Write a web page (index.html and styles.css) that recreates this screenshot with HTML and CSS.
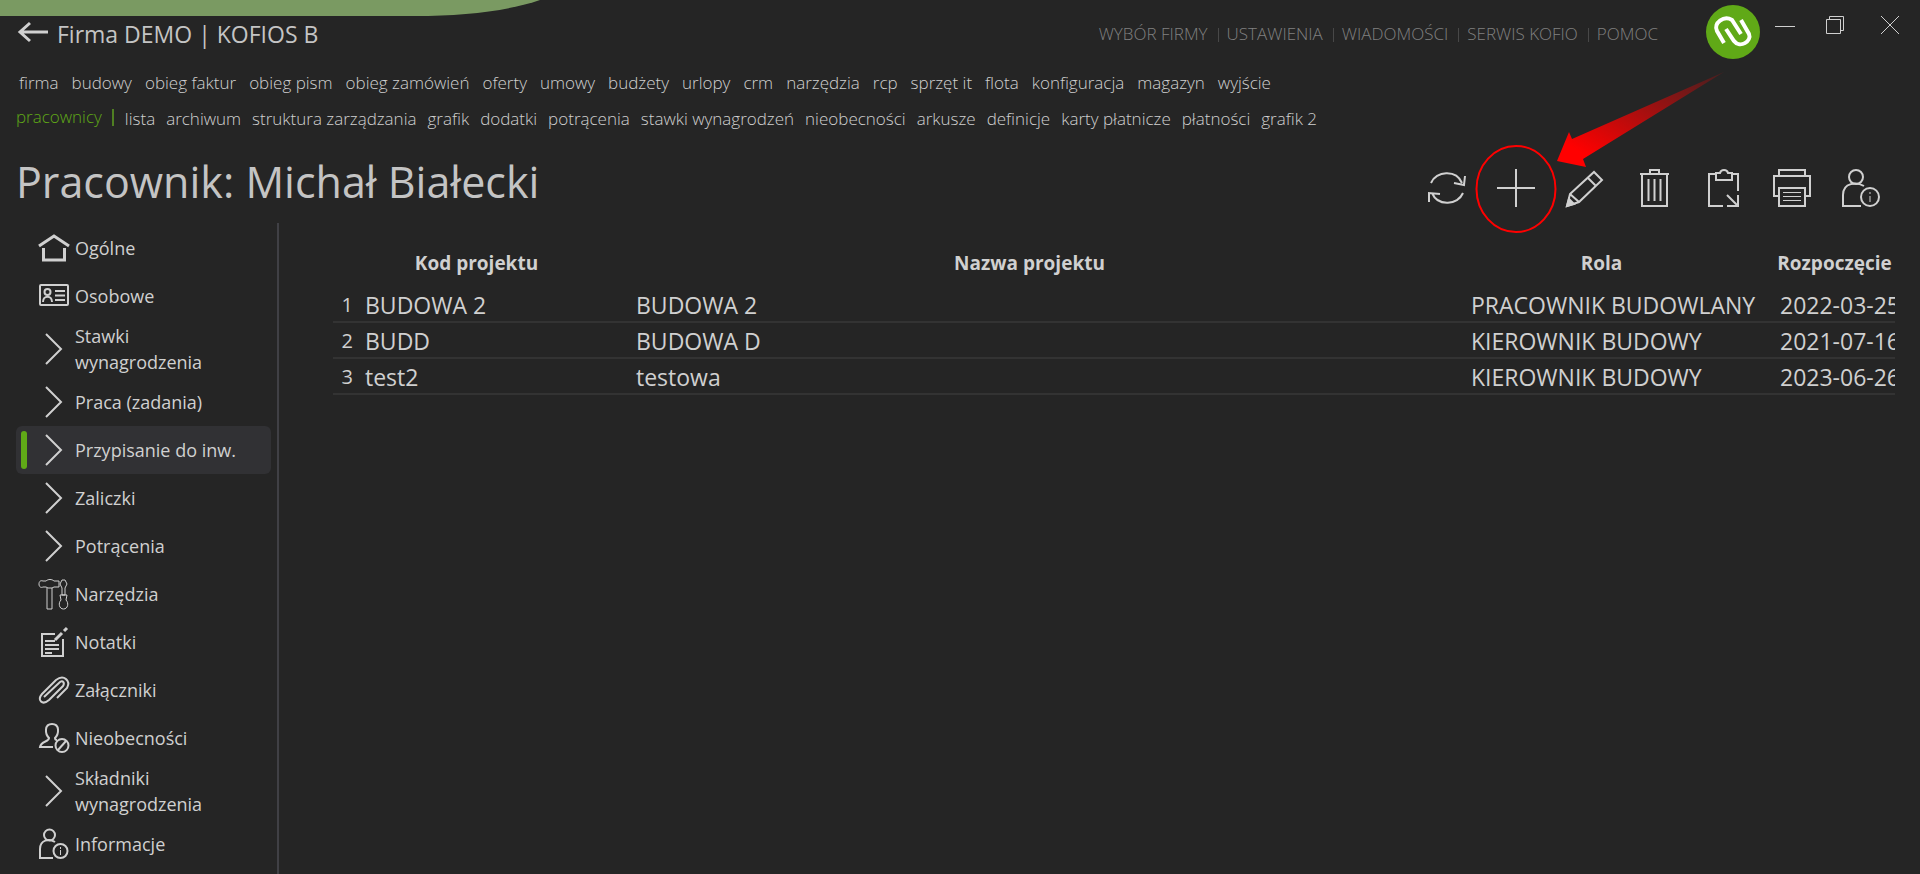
FILE: index.html
```
<!DOCTYPE html>
<html lang="pl">
<head>
    <meta charset="UTF-8">
    <meta name="viewport" content="width=device-width, initial-scale=1.0">
    <title>Firma DEMO | KOFIOS B</title>
    <link rel="stylesheet" href="styles.css">
</head>
<body>

    <svg class="wave" viewBox="0 0 540 16" aria-hidden="true"><path d="M0 0H540C508 11 465 16 415 16H0Z"/></svg>

    <header class="topbar">
        <button class="back" aria-label="Wstecz">
            <svg viewBox="0 0 30 20"><path d="M30 10H3M12 1L2 10l10 9" stroke-width="3"/></svg>
        </button>
        <span class="company">Firma DEMO | KOFIOS B</span>
        <nav class="top-links">
            <a href="#">WYBÓR FIRMY</a>
            <a href="#">USTAWIENIA</a>
            <a href="#">WIADOMOŚCI</a>
            <a href="#">SERWIS KOFIO</a>
            <a href="#">POMOC</a>
        </nav>
        <svg class="logo" viewBox="0 0 54 54" aria-hidden="true">
            <circle cx="27" cy="27" r="27"/>
            <path d="M18 38L11 26C7 18 18 10 26 15L35 29M20 24L28 36C34 44 46 36 43 29L35 15"/>
        </svg>
        <div class="window-buttons">
            <button aria-label="Minimalizuj"><svg viewBox="0 0 20 20"><path d="M0 11.500H20"/></svg></button>
            <button aria-label="Przywróć"><svg viewBox="0 0 20 20"><path d="M1.500 4.500h14v14h-14zM4.500 4V1.500h14v14H16"/></svg></button>
            <button class="close" aria-label="Zamknij"><svg viewBox="0 0 20 20"><path d="M1 1L19 19M19 1L1 19"/></svg></button>
        </div>
    </header>

    <nav class="menu">
        <a href="#">firma</a>
        <a href="#">budowy</a>
        <a href="#">obieg faktur</a>
        <a href="#">obieg pism</a>
        <a href="#">obieg zamówień</a>
        <a href="#">oferty</a>
        <a href="#">umowy</a>
        <a href="#">budżety</a>
        <a href="#">urlopy</a>
        <a href="#">crm</a>
        <a href="#">narzędzia</a>
        <a href="#">rcp</a>
        <a href="#">sprzęt it</a>
        <a href="#">flota</a>
        <a href="#">konfiguracja</a>
        <a href="#">magazyn</a>
        <a href="#">wyjście</a>
    </nav>

    <nav class="menu submenu">
        <a href="#" class="current">pracownicy</a>
        <a href="#">lista</a>
        <a href="#">archiwum</a>
        <a href="#">struktura zarządzania</a>
        <a href="#">grafik</a>
        <a href="#">dodatki</a>
        <a href="#">potrącenia</a>
        <a href="#">stawki wynagrodzeń</a>
        <a href="#">nieobecności</a>
        <a href="#">arkusze</a>
        <a href="#">definicje</a>
        <a href="#">karty płatnicze</a>
        <a href="#">płatności</a>
        <a href="#">grafik 2</a>
    </nav>

    <div class="title-row">
        <h1>Pracownik: Michał Białecki</h1>
        <div class="toolbar">
            <button aria-label="Odśwież">
                <svg viewBox="0 0 38 38"><path d="M3 14C8 2 28 0 34 14M37 7l-1 9-10-2M35 24C30 36 10 38 4 24M1 33V24l11 1"/></svg>
            </button>
            <button class="add" aria-label="Dodaj">
                <svg viewBox="0 0 38 38"><path d="M19 0V38M0 19H38"/></svg>
                <svg class="pointer" viewBox="0 0 260 170" aria-hidden="true">
                    <defs>
                        <linearGradient id="fade" x1="0" y1="1" x2="1" y2="0">
                            <stop offset="0.150" stop-color="#f00"/>
                            <stop offset="1" stop-color="#f00" stop-opacity="0.150"/>
                        </linearGradient>
                    </defs>
                    <ellipse cx="44" cy="122" rx="39.500" ry="43"/>
                    <path d="M85 94L97 65L100 72L252 5L111 92L114 100Z"/>
                </svg>
            </button>
            <button aria-label="Edytuj">
                <svg viewBox="0 0 38 38"><path d="M1 37L4 25L28 3L36 11L13 33ZM22 9l8 8M4 25l9 8"/><path class="solid" d="M1 37l2-7 5 5z"/></svg>
            </button>
            <button aria-label="Usuń">
                <svg viewBox="0 0 38 38"><path d="M5 5H34M7 5V37H32V5M15 5V1H24V5M13.500 10V32M19.500 10V32M25.500 10V32"/></svg>
            </button>
            <button aria-label="Przenieś">
                <svg viewBox="0 0 38 38"><path d="M11 5H5V37H19M28 5H34V22M12 4H16C17 0 23 0 24 4H28V11H12ZM23 26L33 36M34 26V37H23"/></svg>
            </button>
            <button aria-label="Drukuj">
                <svg viewBox="0 0 38 38"><path d="M6 7V1H32V7M6 27H1V7H37V27H32M6 19H32V37H6Z"/><path class="thin" d="M10 23.500H28M10 27.500H28M10 31.500H28"/></svg>
            </button>
            <button aria-label="Informacje o pracowniku">
                <svg viewBox="0 0 38 38"><circle cx="14" cy="8" r="7"/><path d="M19 37H1V26C1 13 15 13 22 17"/><circle cx="28" cy="28" r="9"/><path class="thin" d="M28 27V33M28 23V25"/></svg>
            </button>
        </div>
    </div>

    <div class="content">
        <nav class="sidebar">
            <a href="#"><svg viewBox="0 0 30 30"><path d="M0 13L15 3L30 13M4.500 15V27H25.500V15" stroke-width="3"/></svg>Ogólne</a>
            <a href="#"><svg viewBox="0 0 30 30"><rect x="1" y="4" width="28" height="20" rx="1"/><circle cx="8.500" cy="11" r="3"/><path d="M4 21C4 14 13 14 13 21M16 10H26M16 14.500H26M16 19H26"/></svg>Osobowe</a>
            <a href="#"><svg viewBox="0 0 30 30"><path d="M7 0L22 15L7 30"/></svg>Stawki<br>wynagrodzenia</a>
            <a href="#"><svg viewBox="0 0 30 30"><path d="M7 0L22 15L7 30"/></svg>Praca (zadania)</a>
            <a href="#" class="active"><svg viewBox="0 0 30 30"><path d="M7 0L22 15L7 30"/></svg>Przypisanie do inw.</a>
            <a href="#"><svg viewBox="0 0 30 30"><path d="M7 0L22 15L7 30"/></svg>Zaliczki</a>
            <a href="#"><svg viewBox="0 0 30 30"><path d="M7 0L22 15L7 30"/></svg>Potrącenia</a>
            <a href="#"><svg viewBox="0 0 30 30" class="fine"><path d="M8 9V30H13V9M7 2L4 2C1 1 0 3 0 5C0 8 2 9 4 8H7L9 9H13L15 8H20V2H15C13 0 9 0 7 2ZM23 1H26L28 5L26 9V16H23V9L21 5ZM21 16H28L27 21C30 24 29 30 24.500 30C20 30 19 24 22 21Z"/></svg>Narzędzia</a>
            <a href="#"><svg viewBox="0 0 30 30"><path d="M16 7H3V29H24V12M6 14H16M6 18H20M6 22H20M6 26H13"/><path d="M16 13L23 6M25 4L28 1" stroke-width="3"/></svg>Notatki</a>
            <a href="#"><svg viewBox="0 0 30 30"><path d="M5 22L21 7C24 5 26 8 24 11L10 25C3 31 -2 25 3 19L17 5C25 -1 32 6 28 13L18 23"/></svg>Załączniki</a>
            <a href="#"><svg viewBox="0 0 30 30"><path d="M14 24H1C2 18 10 19 10 15C6 11 5 1 13 1C21 1 20 11 16 15C16 16 17 17 18 17"/><circle cx="23" cy="22.500" r="6.500"/><path d="M19 27L27 18"/></svg>Nieobecności</a>
            <a href="#"><svg viewBox="0 0 30 30"><path d="M7 0L22 15L7 30"/></svg>Składniki<br>wynagrodzenia</a>
            <a href="#"><svg viewBox="0 0 30 30"><circle cx="10.500" cy="6" r="5.500"/><path d="M14 29H1V20C1 11 10 9 16 13"/><circle cx="21.500" cy="22" r="7"/><path class="thin" d="M21.500 21V26M21.500 18V20"/></svg>Informacje</a>
        </nav>

        <main>
            <table>
                <colgroup>
                    <col class="col-no">
                    <col class="col-code">
                    <col>
                    <col class="col-role">
                    <col class="col-start">
                </colgroup>
                <thead>
                    <tr>
                        <th></th>
                        <th>Kod projektu</th>
                        <th>Nazwa projektu</th>
                        <th>Rola</th>
                        <th>Rozpoczęcie</th>
                    </tr>
                </thead>
                <tbody>
                    <tr>
                        <td>1</td>
                        <td>BUDOWA 2</td>
                        <td>BUDOWA 2</td>
                        <td>PRACOWNIK BUDOWLANY</td>
                        <td>2022-03-25</td>
                    </tr>
                    <tr>
                        <td>2</td>
                        <td>BUDD</td>
                        <td>BUDOWA D</td>
                        <td>KIEROWNIK BUDOWY</td>
                        <td>2021-07-16</td>
                    </tr>
                    <tr>
                        <td>3</td>
                        <td>test2</td>
                        <td>testowa</td>
                        <td>KIEROWNIK BUDOWY</td>
                        <td>2023-06-26</td>
                    </tr>
                </tbody>
            </table>
        </main>
    </div>

</body>
</html>
```
FILE: styles.css
```
body {
    margin: 0;
    height: 100vh;
    display: flex;
    flex-direction: column;
    overflow: hidden;
    background-color: #252525;
    color: #d0d0d0;
    font-family: "Open Sans", "Noto Sans", sans-serif;
}
a {
    color: inherit;
    text-decoration: none;
}
button {
    padding: 0;
    border: none;
    background: none;
    color: inherit;
    cursor: pointer;
}
svg {
    display: block;
    fill: none;
    stroke: currentColor;
    stroke-width: 2;
    overflow: visible;
}
.wave {
    position: absolute;
    top: 0;
    left: 0;
    width: 540px;
    fill: #7a9a62;
    stroke: none;
}

/* top bar */
.topbar {
    display: flex;
    align-items: center;
    height: 64px;
    padding: 0 20px 0 18px;
}
.back svg {
    width: 30px;
    height: 20px;
}
.company {
    margin-left: 9px;
    padding-top: 4px;
    font-size: 23px;
    color: #c4c4c4;
}
.top-links {
    display: flex;
    margin-left: auto;
    padding-top: 2px;
    font-size: 17px;
    font-weight: 300;
    color: #808080;
}
.top-links a + a::before {
    content: "";
    display: inline-block;
    height: 14px;
    margin: 0 8px 0 10px;
    border-left: 1px solid #484848;
    vertical-align: -2px;
}
.logo {
    width: 54px;
    height: 54px;
    margin-left: 48px;
}
.logo circle {
    fill: #60a917;
    stroke: none;
}
.logo path {
    stroke: #fff;
    stroke-width: 4;
}
.window-buttons {
    display: flex;
    gap: 30px;
    margin: 0 0 14px 15px;
}
.window-buttons svg {
    width: 20px;
    height: 20px;
    stroke-width: 1;
}
.window-buttons .close {
    margin-left: 5px;
}

/* menus */
.menu {
    display: flex;
    align-items: center;
    gap: 13px;
    height: 36px;
    padding: 0 19px;
    font-size: 17px;
    font-weight: 300;
    white-space: nowrap;
}
.submenu {
    gap: 11px;
    padding: 0 16px;
}
.submenu .current {
    padding-bottom: 4px;
    color: #60a917;
}
.submenu .current::after {
    content: "";
    display: inline-block;
    height: 17px;
    margin-left: 10px;
    border-left: 2px solid #4f7f22;
    vertical-align: -3px;
}

/* title and toolbar */
.title-row {
    display: flex;
    align-items: center;
    justify-content: space-between;
    height: 87px;
    padding: 0 40px 0 16px;
}
h1 {
    margin: 0;
    padding-top: 4px;
    font-size: 43px;
    font-weight: 400;
    color: #c4c4c4;
}
.toolbar {
    display: flex;
    gap: 31px;
    padding-top: 16px;
}
.toolbar svg {
    width: 38px;
    height: 38px;
}
.toolbar .solid {
    fill: currentColor;
}
.thin {
    stroke-width: 1;
}
.add {
    position: relative;
}
.toolbar .pointer {
    position: absolute;
    top: -102px;
    left: -25px;
    width: 260px;
    height: 170px;
    pointer-events: none;
}
.pointer ellipse {
    stroke: #f00;
}
.pointer path {
    fill: url(#fade);
    stroke: none;
}

/* sidebar */
.content {
    display: flex;
    flex: 1;
    min-height: 0;
}
.sidebar {
    display: flex;
    flex-direction: column;
    flex: none;
    width: 255px;
    padding: 1px 6px 0 16px;
    border-right: 2px solid #404045;
}
.sidebar a {
    position: relative;
    box-sizing: border-box;
    min-height: 48px;
    padding: 3px 0 3px 59px;
    border-radius: 6px;
    font-size: 18px;
    line-height: 26px;
    align-content: center;
}
.sidebar svg {
    position: absolute;
    top: calc(50% - 15px);
    left: 23px;
    width: 30px;
    height: 30px;
}
.sidebar .fine {
    stroke-width: 1;
}
.sidebar .active {
    background-color: #313134;
}
.sidebar .active::before {
    content: "";
    position: absolute;
    top: 5px;
    bottom: 5px;
    left: 5px;
    width: 6px;
    border-radius: 3px;
    background-color: #60a917;
}

/* projects table */
main {
    flex: 1;
    min-width: 0;
    padding: 18px 25px 0 54px;
}
table {
    width: 100%;
    table-layout: fixed;
    border-collapse: collapse;
}
.col-no {
    width: 26px;
}
.col-code {
    width: 271px;
}
.col-role {
    width: 309px;
}
.col-start {
    width: 121px;
}
th {
    height: 46px;
    padding: 0 36px 0 0;
    font-size: 19px;
    line-height: 44px;
    vertical-align: top;
}
th:last-child {
    padding: 0;
}
td {
    height: 31px;
    padding: 3px 0 0 6px;
    border-bottom: 2px solid #333;
    font-size: 23px;
    line-height: 31px;
    white-space: nowrap;
    overflow: hidden;
}
td:first-child {
    padding: 0 6px 0 0;
    font-size: 20px;
    text-align: right;
}
```
